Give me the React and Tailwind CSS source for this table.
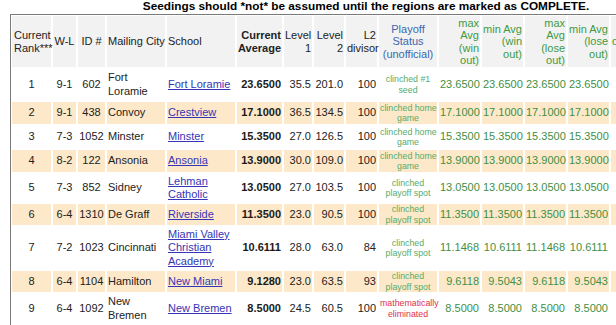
import React from "react";

const rows = [
  { r: "1", wl: "9-1", id: "602", city: ["Fort", "Loramie"], school: ["Fort Loramie"], avg: "23.6500", l1: "35.5", l2: "201.0", div: "100", status: ["clinched #1", "seed"], red: false, v: ["23.6500", "23.6500", "23.6500", "23.6500"], h: "h-[33px]" },
  { r: "2", wl: "9-1", id: "438", city: ["Convoy"], school: ["Crestview"], avg: "17.1000", l1: "36.5", l2: "134.5", div: "100", status: ["clinched home", "game"], v: ["17.1000", "17.1000", "17.1000", "17.1000"], h: "h-[24px]" },
  { r: "3", wl: "7-3", id: "1052", city: ["Minster"], school: ["Minster"], avg: "15.3500", l1: "27.0", l2: "126.5", div: "100", status: ["clinched home", "game"], v: ["15.3500", "15.3500", "15.3500", "15.3500"], h: "h-[24px]" },
  { r: "4", wl: "8-2", id: "122", city: ["Ansonia"], school: ["Ansonia"], avg: "13.9000", l1: "30.0", l2: "109.0", div: "100", status: ["clinched home", "game"], v: ["13.9000", "13.9000", "13.9000", "13.9000"], h: "h-[24px]" },
  { r: "5", wl: "7-3", id: "852", city: ["Sidney"], school: ["Lehman", "Catholic"], avg: "13.0500", l1: "27.0", l2: "103.5", div: "100", status: ["clinched", "playoff spot"], v: ["13.0500", "13.0500", "13.0500", "13.0500"], h: "h-[30px]" },
  { r: "6", wl: "6-4", id: "1310", city: ["De Graff"], school: ["Riverside"], avg: "11.3500", l1: "23.0", l2: "90.5", div: "100", status: ["clinched", "playoff spot"], v: ["11.3500", "11.3500", "11.3500", "11.3500"], h: "h-[22px]" },
  { r: "7", wl: "7-2", id: "1023", city: ["Cincinnati"], school: ["Miami Valley", "Christian", "Academy"], avg: "10.6111", l1: "28.0", l2: "63.0", div: "84", status: ["clinched", "playoff spot"], v: ["11.1468", "10.6111", "11.1468", "10.6111"], h: "h-[44px]" },
  { r: "8", wl: "6-4", id: "1104", city: ["Hamilton"], school: ["New Miami"], avg: "9.1280", l1: "23.0", l2: "63.5", div: "93", status: ["clinched", "playoff spot"], v: ["9.6118", "9.5043", "9.6118", "9.5043"], h: "h-[22px]" },
  { r: "9", wl: "6-4", id: "1092", city: ["New", "Bremen"], school: ["New Bremen"], avg: "8.5000", l1: "24.5", l2: "60.5", div: "100", status: ["mathematically", "eliminated"], red: true, v: ["8.5000", "8.5000", "8.5000", "8.5000"], h: "h-[31px]" },
];

function Lines({ items }) {
  return items.map((t, i) => (
    <React.Fragment key={i}>
      {i > 0 && <br />}
      {t}
    </React.Fragment>
  ));
}

const cell = "border border-white px-[1px] align-middle whitespace-nowrap";

export default function App() {
  return (
    <div
      className="w-[616px] h-[325px] overflow-hidden bg-white text-[#222]"
      style={{ fontFamily: '"Liberation Sans", Arial, sans-serif' }}
    >
      <div className="ml-[10px] w-[712px]">
        <div className="h-[14px] text-center font-bold text-[11.8px] leading-[12px] text-black whitespace-nowrap">
          Seedings should *not* be assumed until the regions are marked as COMPLETE.
        </div>
        <table className="w-[712px] table-fixed border-separate border-spacing-0 border-t border-l border-[#7a7a7a] text-[11px] leading-[13.5px]">
          <colgroup>
            <col className="w-[41px]" />
            <col className="w-[25px]" />
            <col className="w-[29px]" />
            <col className="w-[60px]" />
            <col className="w-[70px]" />
            <col className="w-[47px]" />
            <col className="w-[30px]" />
            <col className="w-[32px]" />
            <col className="w-[33px]" />
            <col className="w-[60px]" />
            <col className="w-[43px]" />
            <col className="w-[43px]" />
            <col className="w-[43px]" />
            <col className="w-[43px]" />
            <col className="w-[112px]" />
          </colgroup>
          <thead>
            <tr className="h-[53px] bg-[#f2f2f2] leading-[12.5px]">
              <td className={`${cell} text-left pl-[2px]`}>Current<br />Rank***</td>
              <td className={`${cell} text-center`}>W-L</td>
              <td className={`${cell} text-center`}>ID #</td>
              <td className={`${cell} text-left`}>Mailing City</td>
              <td className={`${cell} text-left`}>School</td>
              <td className={`${cell} text-right font-bold`}>Current<br />Average</td>
              <td className={`${cell} text-right`}>Level<br />1</td>
              <td className={`${cell} text-right`}>Level<br />2</td>
              <td className={`${cell} text-right`}>L2<br />divisor</td>
              <td className={`${cell} text-center text-[#3a69b0]`}>Playoff<br />Status<br />(unofficial)</td>
              <td className={`${cell} text-right text-[#3f9a3f]`}>max<br />Avg<br />(win<br />out)</td>
              <td className={`${cell} text-right text-[#3f9a3f]`}>min Avg<br />(win<br />out)</td>
              <td className={`${cell} text-right text-[#3f9a3f]`}>max<br />Avg<br />(lose<br />out)</td>
              <td className={`${cell} text-right text-[#3f9a3f]`}>min Avg<br />(lose<br />out)</td>
              <td className={`${cell} text-left pl-[1px] text-[#3f9a3f]`}>d</td>
            </tr>
          </thead>
          <tbody>
            {rows.map((row, i) => (
              <tr key={row.r} className={`${row.h} ${i % 2 === 1 ? "bg-[#fde9c9]" : "bg-white"}`}>
                <td className={`${cell} text-center`}>{row.r}</td>
                <td className={`${cell} text-center`}>{row.wl}</td>
                <td className={`${cell} text-center`}>{row.id}</td>
                <td className={`${cell} text-left`}><Lines items={row.city} /></td>
                <td className={`${cell} text-left`}>
                  <a href="#" className="text-[#3535b5] underline underline-offset-[1px]">
                    <Lines items={row.school} />
                  </a>
                </td>
                <td className={`${cell} text-right font-bold text-[#1a1a1a]`}>{row.avg}</td>
                <td className={`${cell} text-right`}>{row.l1}</td>
                <td className={`${cell} text-right`}>{row.l2}</td>
                <td className={`${cell} text-right`}>{row.div}</td>
                <td className={`${cell} text-center text-[8.8px] leading-[10.5px] ${row.red ? "text-[#e0304a]" : "text-[#55ab6a]"}`}>
                  <Lines items={row.status} />
                </td>
                {row.v.map((x, j) => (
                  <td key={j} className={`${cell} text-right text-[#3f8f45]`}>{x}</td>
                ))}
                <td className={cell}></td>
              </tr>
            ))}
            <tr className="h-[30px] bg-[#fde9c9]">
              {Array.from({ length: 15 }).map((_, j) => (
                <td key={j} className={cell}></td>
              ))}
            </tr>
          </tbody>
        </table>
      </div>
    </div>
  );
}
